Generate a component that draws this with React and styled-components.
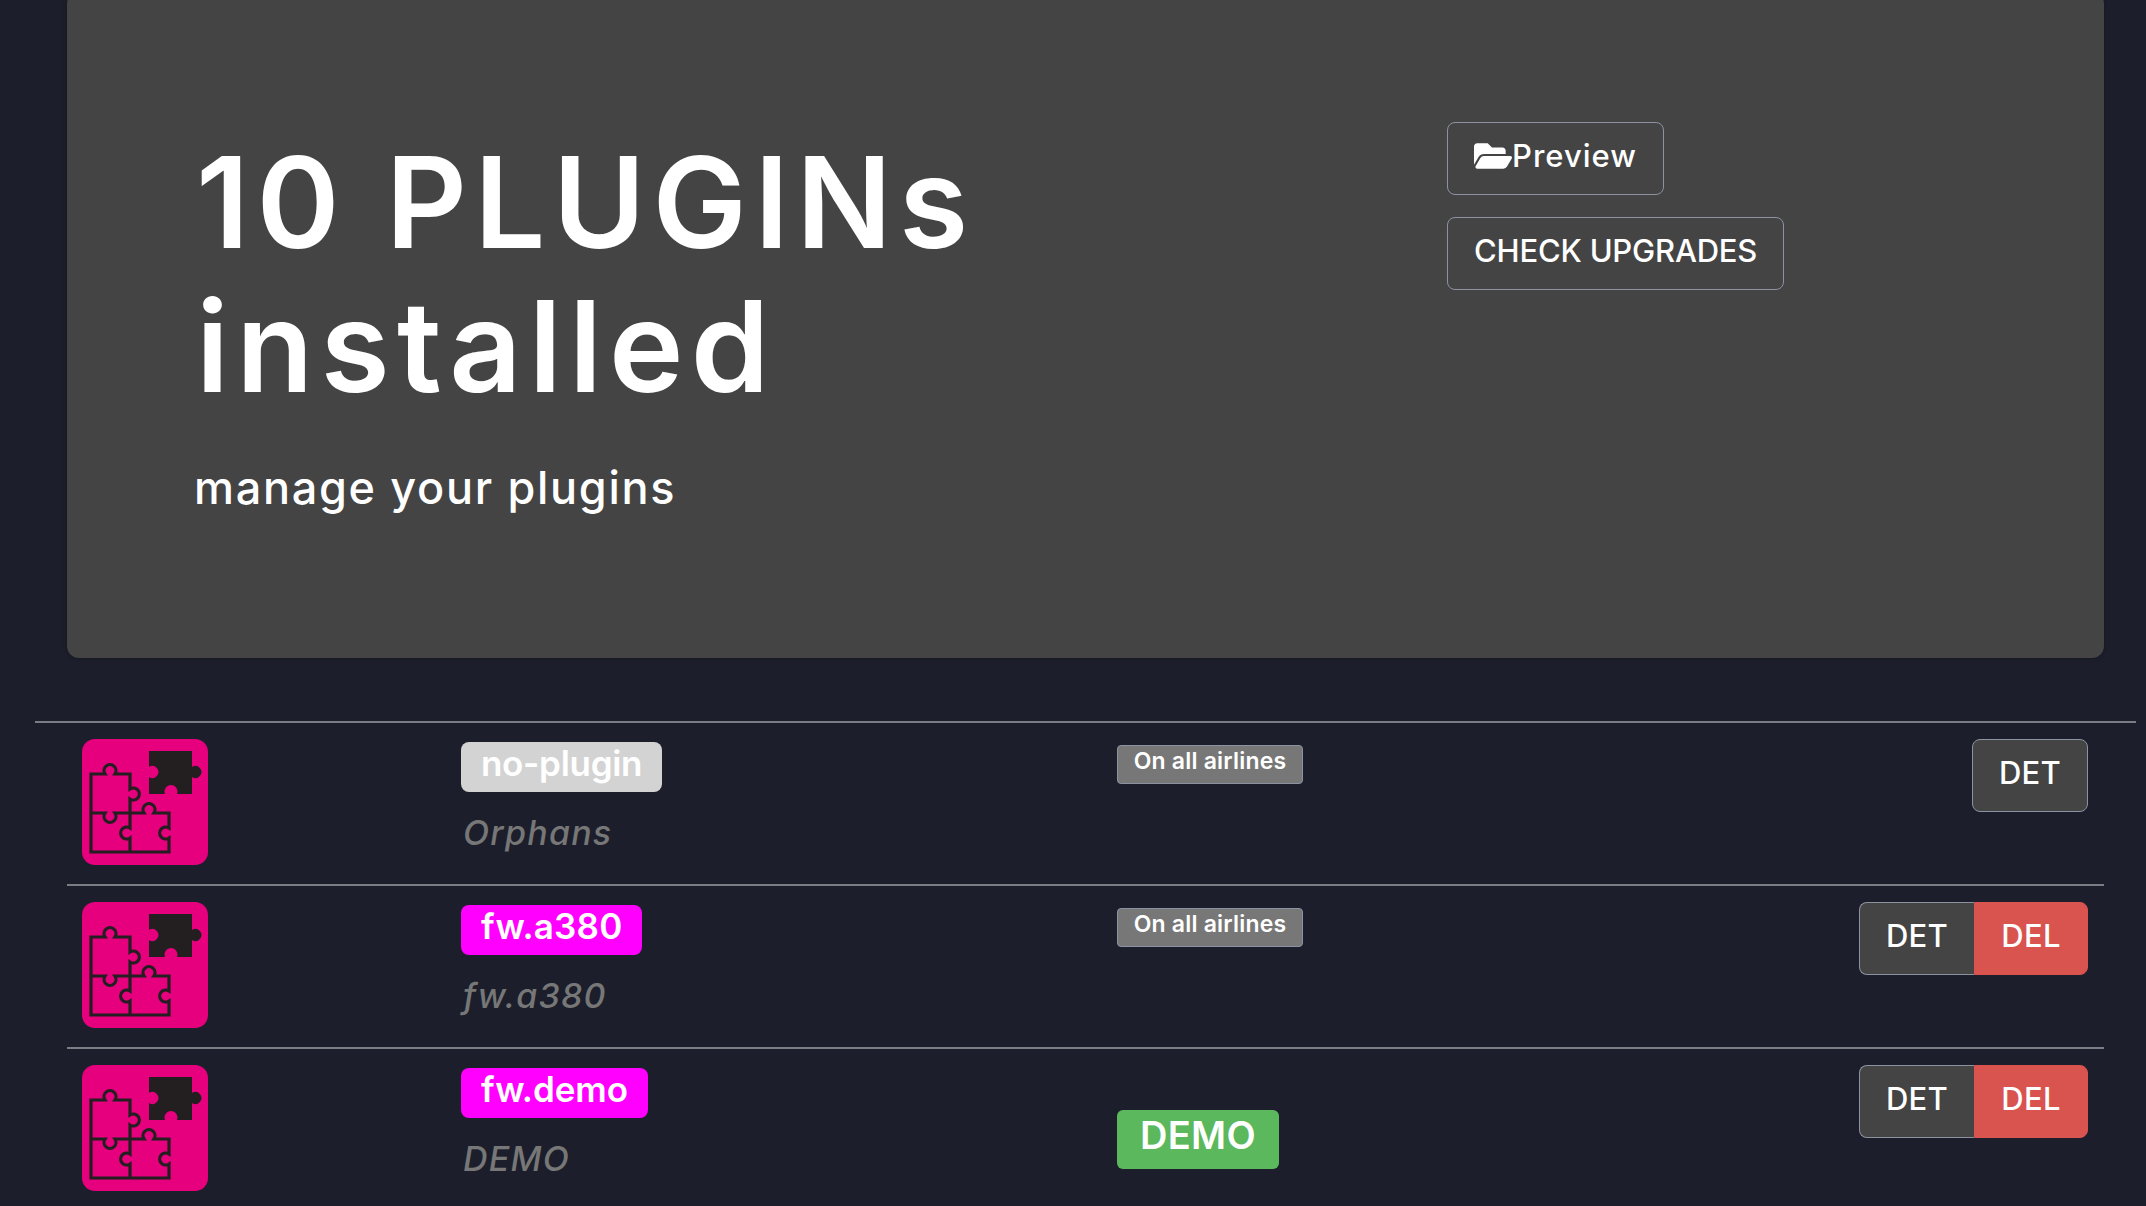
import React from 'react';
import styled, { createGlobalStyle } from 'styled-components';
import { FaFolderOpen } from 'react-icons/fa';

const Global = createGlobalStyle`
  html, body { margin: 0; padding: 0; background: #1c1f2b; }
  body { font-family: Inter, "DejaVu Sans", sans-serif; color: #fff; height: 1206px; overflow: hidden; }
`;
const Page = styled.div`padding: 0 10px 0 35px;`;
const Hero = styled.section`
  margin: -8px 32px 63px 32px; height: 666px; box-sizing: border-box; background: #444;
  border-radius: 12px; box-shadow: 0 0 4px rgba(0,0,0,.3);
  display: grid; grid-template-columns: 1253px 1fr; padding: 130px 0 0 127px;
`;
const Title = styled.h1`margin: 0 0 0 2px; font-size: 126px; line-height: 144px; font-weight: 600; letter-spacing: 7.2px; padding-top: 8px;`;
const Lead = styled.p`margin: 44px 0 0; font-size: 45px; line-height: 52px; font-weight: 500; letter-spacing: 1.7px;`;
const HeroActions = styled.div`display: flex; flex-direction: column; align-items: flex-start; gap: 22px;`;
const OutlineBtn = styled.button`
  height: 73px; box-sizing: border-box; padding: 0 26px 6px; display: inline-flex; align-items: center; gap: 0;
  background: transparent; border: 1.5px solid #8b93a1; border-radius: 8px; color: #fff;
  font: 500 31px Inter, sans-serif; letter-spacing: ${p => p.$track}px;
`;
const Rule = styled.hr`margin: 0 ${p => p.$wide ? '0' : '32px'}; border: 0; border-top: 2px solid #7b7d84;`;
const Row = styled.div`
  margin: 0 32px; height: 161px; padding: 16px 16px 0 15px; box-sizing: border-box;
  display: grid; grid-template-columns: 379px 656px 1fr auto; align-items: start;
`;
const Icon = styled.svg`width: 126px; height: 126px; display: block;`;
const NameCol = styled.div`display: flex; flex-direction: column; align-items: flex-start; padding-top: 3px;`;
const Tag = styled.span`
  height: 50px; box-sizing: border-box; padding: 0 20px; background: ${p => p.$color}; border-radius: 8px;
  font-size: 35px; line-height: 42px; font-weight: 600; color: #fff; letter-spacing: ${p => p.$track}px;
`;
const Sub = styled.span`margin: 19px 0 0 2px; font-size: 34px; line-height: 44px; font-style: italic; font-weight: 500; color: #777; letter-spacing: 1.2px;`;
const Airlines = styled.span`
  display: inline-block; margin-top: 6px; height: 39px; width: 186px; box-sizing: border-box; text-align: center;
  background: #777; border: 1.5px solid #8b93a1; border-radius: 4px; font-size: 23px; line-height: 30px; font-weight: 600; letter-spacing: .2px;
`;
const Demo = styled.span`
  display: inline-block; margin-top: 45px; height: 59px; width: 162px; text-align: center; background: #5cb85c; border-radius: 6px;
  font-size: 38px; line-height: 50px; font-weight: 600; letter-spacing: .3px;
`;
const Group = styled.div`display: flex; justify-content: flex-end;`;
const Btn = styled.button`
  height: 73px; width: ${p => p.$w}px; box-sizing: border-box; background: ${p => p.$del ? '#d9534f' : '#444'};
  border: 1.5px solid ${p => p.$del ? '#d9534f' : '#8b93a1'}; color: #fff; font: 500 31px Inter, sans-serif; padding: 0 0 7px; letter-spacing: .3px;
  border-radius: ${p => p.$del ? '0 8px 8px 0' : p.$solo ? '8px' : '8px 0 0 8px'};
  ${p => (!p.$del && !p.$solo) ? 'border-right: 0;' : ''}
`;

function Puzzle() {
  const line = '#231f20';
  return (
    <Icon viewBox="0 0 126 126">
      <rect width="126" height="126" rx="13" fill="#e6007e" />
      <path fill={line} d="M67 12H110V28A6 6 0 1 1 110 38V55H95A6.500 6.500 0 1 0 83 55H67V38A6 6 0 1 0 67 28Z" />
      <path fill="none" stroke={line} strokeWidth="3.2" d="M9 74V35H23A6 6 0 1 1 33 35H48V50A6 6 0 1 1 48 60V74H33A6 6 0 1 1 23 74H9V113H87V99A6 6 0 1 1 87 89V74H72A6 6 0 1 0 62 74H48V89A6 6 0 1 0 48 99V113" />
    </Icon>
  );
}

const rows = [
  { name: 'no-plugin', sub: 'Orphans', color: '#d3d3d3', track: -.3, solo: true },
  { name: 'fw.a380', sub: 'fw.a380', color: '#ff00ff', track: .2 },
  { name: 'fw.demo', sub: 'DEMO', color: '#ff00ff', track: -.1, demo: true },
];

export default function App() {
  return (
    <Page>
      <Global />
      <Hero>
        <div>
          <Title>10 PLUGINs<br />installed</Title>
          <Lead>manage your plugins</Lead>
        </div>
        <HeroActions>
          <OutlineBtn $track={1}><FaFolderOpen size={38} />Preview</OutlineBtn>
          <OutlineBtn $track={-.2}>CHECK UPGRADES</OutlineBtn>
        </HeroActions>
      </Hero>
      {rows.map((r, i) => (
        <React.Fragment key={r.name}>
          <Rule $wide={i === 0} />
          <Row>
            <Puzzle />
            <NameCol>
              <Tag $color={r.color} $track={r.track}>{r.name}</Tag>
              <Sub>{r.sub}</Sub>
            </NameCol>
            <div>{r.demo ? <Demo>DEMO</Demo> : <Airlines>On all airlines</Airlines>}</div>
            <Group>
              <Btn $w={r.solo ? 116 : 115} $solo={r.solo}>DET</Btn>
              {!r.solo && <Btn $w={114} $del>DEL</Btn>}
            </Group>
          </Row>
        </React.Fragment>
      ))}
    </Page>
  );
}
